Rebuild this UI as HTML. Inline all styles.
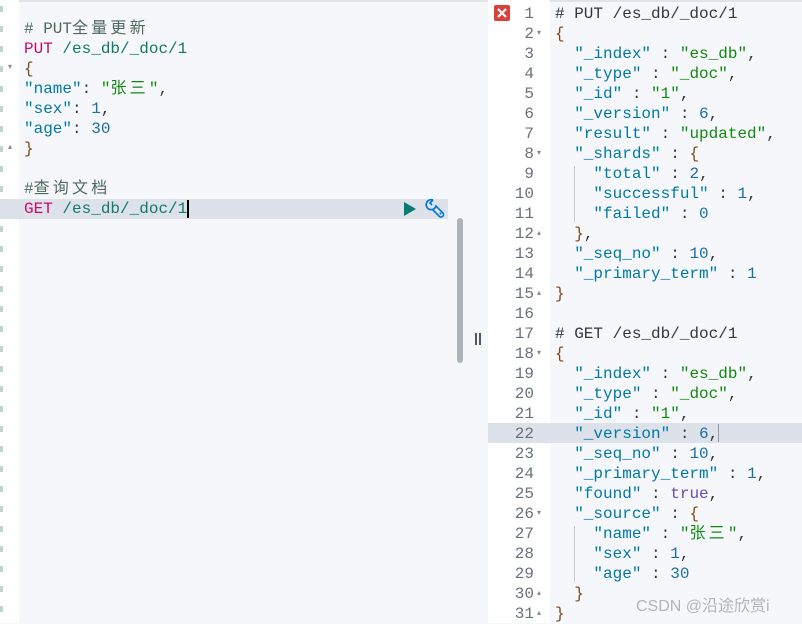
<!DOCTYPE html>
<html><head><meta charset="utf-8"><style>
*{margin:0;padding:0;box-sizing:border-box}
body{width:802px;height:623px;overflow:hidden;background:#f5f7fa;font-family:"Liberation Mono","Noto Sans CJK SC",monospace;font-size:16px;position:relative}
.l{position:absolute;height:20px;line-height:20px;white-space:pre}
.g{position:absolute;left:0;top:0;width:19px;height:623px;background:#fff;overflow:hidden}
.rg{position:absolute;left:488px;top:0;width:62px;height:623px;background:#fff}
.n{position:absolute;width:38px;text-align:right;color:#69707d;height:20px;line-height:20px}
.f{position:absolute;left:537px;font-size:8px;color:#888;line-height:20px}
.z{letter-spacing:3.2px}
.c{color:#4f6a5c}.m{color:#c80a68}.u{color:#0f7a6c}.k{color:#0079a5}.s{color:#128a12}.d{color:#1b6fa3}.b{color:#7a4a1a}.t{color:#6c49b8}.h{color:#343741}
</style></head><body>
<div style="position:absolute;left:0;top:0;width:802px;height:2px;background:#dfe3ea"></div>
<div class="g">
<div style="position:absolute;left:0;top:0;width:3px;height:623px;background:repeating-linear-gradient(#fff 0 6px,#7aa 6px 12px,#fff 12px 20px);opacity:.5"></div>
<div style="position:absolute;left:0;top:199px;width:19px;height:20px;background:#dde2ea"></div>
<div style="position:absolute;left:8px;top:62px;font-size:8px;color:#888">▾</div>
<div style="position:absolute;left:8px;top:142px;font-size:8px;color:#888">▴</div>
</div>
<div style="position:absolute;left:19px;top:199px;width:429px;height:20px;background:#dde2ea"></div>
<div class="l" style="left:24px;top:19px"><span class="c"># PUT<span class="z">全量更新</span></span></div>
<div class="l" style="left:24px;top:39px"><span class="m">PUT</span> <span class="u">/es_db/_doc/1</span></div>
<div class="l" style="left:24px;top:59px"><span class="b">{</span></div>
<div class="l" style="left:24px;top:79px"><span class="k">"name"</span><span class="h">:</span> <span class="s">"<span class="z">张三</span>"</span><span class="h">,</span></div>
<div class="l" style="left:24px;top:99px"><span class="k">"sex"</span><span class="h">:</span> <span class="d">1</span><span class="h">,</span></div>
<div class="l" style="left:24px;top:119px"><span class="k">"age"</span><span class="h">:</span> <span class="d">30</span></div>
<div class="l" style="left:24px;top:139px"><span class="b">}</span></div>
<div class="l" style="left:24px;top:179px"><span class="c">#<span class="z">查询文档</span></span></div>
<div class="l" style="left:24px;top:199px"><span class="m">GET</span> <span class="u">/es_db/_doc/1</span></div>
<div style="position:absolute;left:187px;top:200px;width:2px;height:18px;background:#000"></div>
<svg style="position:absolute;left:403px;top:201px" width="14" height="16"><path d="M1 1 L13 8 L1 15Z" fill="#017d73"/></svg>
<svg style="position:absolute;left:424px;top:198px" width="22" height="22" viewBox="0 0 22 22"><path d="M9 2 A5 5 0 1 0 12 8 L19 15 A2.3 2.3 0 0 1 15 18 L8 11" fill="none" stroke="#0077cc" stroke-width="1.6"/><path d="M9 2 L6 5 L8 7" fill="none" stroke="#0077cc" stroke-width="1.6"/><circle cx="16.5" cy="15.5" r="1" fill="#0077cc"/></svg>
<div style="position:absolute;left:457px;top:218px;width:6px;height:145px;border-radius:3px;background:#aeb3ba"></div>
<div style="position:absolute;left:475px;top:333px;width:2px;height:12px;background:#555"></div>
<div style="position:absolute;left:479px;top:333px;width:2px;height:12px;background:#555"></div>
<div class="rg"></div>
<div style="position:absolute;left:488px;top:423px;width:314px;height:20px;background:#dde2ea"></div>
<svg style="position:absolute;left:494px;top:5px" width="16" height="16"><rect x="0" y="0" width="16" height="16" rx="2" fill="#d9413a"/><path d="M4 4 L12 12 M12 4 L4 12" stroke="#fff" stroke-width="2.2"/></svg>
<div id="nums"></div>
<div class="l" style="left:555px;top:4px"><span class="h"># PUT /es_db/_doc/1</span></div>
<div class="l" style="left:555px;top:24px"><span class="b">{</span></div>
<div class="l" style="left:555px;top:44px">  <span class="k">"_index"</span> <span class="h">:</span> <span class="s">"es_db"</span><span class="h">,</span></div>
<div class="l" style="left:555px;top:64px">  <span class="k">"_type"</span> <span class="h">:</span> <span class="s">"_doc"</span><span class="h">,</span></div>
<div class="l" style="left:555px;top:84px">  <span class="k">"_id"</span> <span class="h">:</span> <span class="s">"1"</span><span class="h">,</span></div>
<div class="l" style="left:555px;top:104px">  <span class="k">"_version"</span> <span class="h">:</span> <span class="d">6</span><span class="h">,</span></div>
<div class="l" style="left:555px;top:124px">  <span class="k">"result"</span> <span class="h">:</span> <span class="s">"updated"</span><span class="h">,</span></div>
<div class="l" style="left:555px;top:144px">  <span class="k">"_shards"</span> <span class="h">:</span> <span class="b">{</span></div>
<div class="l" style="left:555px;top:164px">    <span class="k">"total"</span> <span class="h">:</span> <span class="d">2</span><span class="h">,</span></div>
<div class="l" style="left:555px;top:184px">    <span class="k">"successful"</span> <span class="h">:</span> <span class="d">1</span><span class="h">,</span></div>
<div class="l" style="left:555px;top:204px">    <span class="k">"failed"</span> <span class="h">:</span> <span class="d">0</span></div>
<div class="l" style="left:555px;top:224px">  <span class="b">}</span><span class="h">,</span></div>
<div class="l" style="left:555px;top:244px">  <span class="k">"_seq_no"</span> <span class="h">:</span> <span class="d">10</span><span class="h">,</span></div>
<div class="l" style="left:555px;top:264px">  <span class="k">"_primary_term"</span> <span class="h">:</span> <span class="d">1</span></div>
<div class="l" style="left:555px;top:284px"><span class="b">}</span></div>
<div class="l" style="left:555px;top:324px"><span class="h"># GET /es_db/_doc/1</span></div>
<div class="l" style="left:555px;top:344px"><span class="b">{</span></div>
<div class="l" style="left:555px;top:364px">  <span class="k">"_index"</span> <span class="h">:</span> <span class="s">"es_db"</span><span class="h">,</span></div>
<div class="l" style="left:555px;top:384px">  <span class="k">"_type"</span> <span class="h">:</span> <span class="s">"_doc"</span><span class="h">,</span></div>
<div class="l" style="left:555px;top:404px">  <span class="k">"_id"</span> <span class="h">:</span> <span class="s">"1"</span><span class="h">,</span></div>
<div class="l" style="left:555px;top:424px">  <span class="k">"_version"</span> <span class="h">:</span> <span class="d">6</span><span class="h">,</span></div>
<div style="position:absolute;left:718px;top:424px;width:1px;height:18px;background:#999"></div>
<div class="l" style="left:555px;top:444px">  <span class="k">"_seq_no"</span> <span class="h">:</span> <span class="d">10</span><span class="h">,</span></div>
<div class="l" style="left:555px;top:464px">  <span class="k">"_primary_term"</span> <span class="h">:</span> <span class="d">1</span><span class="h">,</span></div>
<div class="l" style="left:555px;top:484px">  <span class="k">"found"</span> <span class="h">:</span> <span class="t">true</span><span class="h">,</span></div>
<div class="l" style="left:555px;top:504px">  <span class="k">"_source"</span> <span class="h">:</span> <span class="b">{</span></div>
<div class="l" style="left:555px;top:524px">    <span class="k">"name"</span> <span class="h">:</span> <span class="s">"<span class="z">张三</span>"</span><span class="h">,</span></div>
<div class="l" style="left:555px;top:544px">    <span class="k">"sex"</span> <span class="h">:</span> <span class="d">1</span><span class="h">,</span></div>
<div class="l" style="left:555px;top:564px">    <span class="k">"age"</span> <span class="h">:</span> <span class="d">30</span></div>
<div class="l" style="left:555px;top:584px">  <span class="b">}</span></div>
<div class="l" style="left:555px;top:604px"><span class="b">}</span></div>
<div style="position:absolute;left:574px;top:166px;width:1px;height:56px;background:#c8ccd2"></div>
<div style="position:absolute;left:574px;top:526px;width:1px;height:56px;background:#c8ccd2"></div>
<div style="position:absolute;left:636px;top:592px;font-family:'Liberation Sans','Noto Sans CJK SC',sans-serif;font-size:16px;color:#b4b4b4">CSDN @沿途欣赏i</div>
<script>
var h='';var fu={2:'▾',8:'▾',12:'▴',15:'▴',18:'▾',26:'▾',30:'▴',31:'▴'};
for(var i=1;i<=31;i++){var t=4+(i-1)*20;h+='<div class="n" style="left:496px;top:'+t+'px">'+i+'</div>';if(fu[i])h+='<div class="f" style="top:'+t+'px">'+fu[i]+'</div>';}
document.getElementById('nums').innerHTML=h;
</script>
</body></html>
